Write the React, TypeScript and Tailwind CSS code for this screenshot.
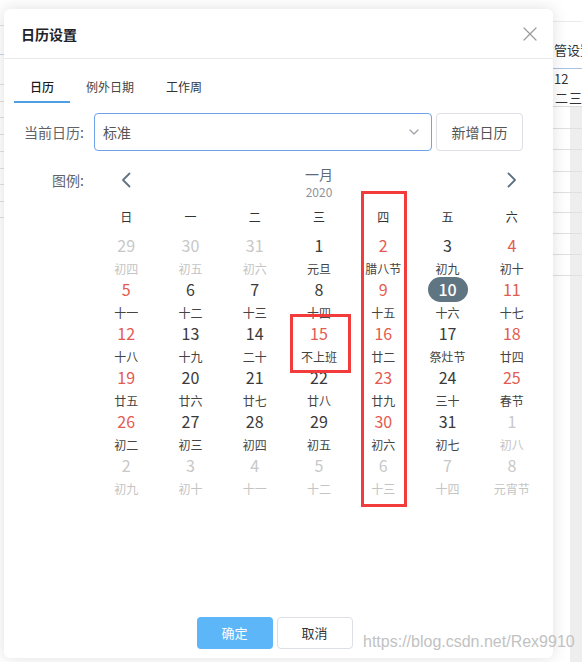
import React from "react";

type Cell = { d: string; l: string; t: "n" | "r" | "g"; lg?: boolean; sel?: boolean };

const rows: Cell[][] = [
  [
    { d: "29", l: "初四", t: "g", lg: true },
    { d: "30", l: "初五", t: "g", lg: true },
    { d: "31", l: "初六", t: "g", lg: true },
    { d: "1", l: "元旦", t: "n" },
    { d: "2", l: "腊八节", t: "r" },
    { d: "3", l: "初九", t: "n" },
    { d: "4", l: "初十", t: "r" },
  ],
  [
    { d: "5", l: "十一", t: "r" },
    { d: "6", l: "十二", t: "n" },
    { d: "7", l: "十三", t: "n" },
    { d: "8", l: "十四", t: "n" },
    { d: "9", l: "十五", t: "r" },
    { d: "10", l: "十六", t: "n", sel: true },
    { d: "11", l: "十七", t: "r" },
  ],
  [
    { d: "12", l: "十八", t: "r" },
    { d: "13", l: "十九", t: "n" },
    { d: "14", l: "二十", t: "n" },
    { d: "15", l: "不上班", t: "r" },
    { d: "16", l: "廿二", t: "r" },
    { d: "17", l: "祭灶节", t: "n" },
    { d: "18", l: "廿四", t: "r" },
  ],
  [
    { d: "19", l: "廿五", t: "r" },
    { d: "20", l: "廿六", t: "n" },
    { d: "21", l: "廿七", t: "n" },
    { d: "22", l: "廿八", t: "n" },
    { d: "23", l: "廿九", t: "r" },
    { d: "24", l: "三十", t: "n" },
    { d: "25", l: "春节", t: "r" },
  ],
  [
    { d: "26", l: "初二", t: "r" },
    { d: "27", l: "初三", t: "n" },
    { d: "28", l: "初四", t: "n" },
    { d: "29", l: "初五", t: "n" },
    { d: "30", l: "初六", t: "r" },
    { d: "31", l: "初七", t: "n" },
    { d: "1", l: "初八", t: "g", lg: true },
  ],
  [
    { d: "2", l: "初九", t: "g", lg: true },
    { d: "3", l: "初十", t: "g", lg: true },
    { d: "4", l: "十一", t: "g", lg: true },
    { d: "5", l: "十二", t: "g", lg: true },
    { d: "6", l: "十三", t: "g", lg: true },
    { d: "7", l: "十四", t: "g", lg: true },
    { d: "8", l: "元宵节", t: "g", lg: true },
  ],
];

const weekdays = ["日", "一", "二", "三", "四", "五", "六"];

function numClass(c: Cell) {
  if (c.t === "r") return "text-[#e35b50]";
  if (c.t === "g") return "text-[#c8c8c8]";
  return "text-[#3a3a3a]";
}

function Background() {
  return (
    <div className="flex h-full w-full">
      <div className="flex w-[4px] flex-col">
        <div className="h-[26px] border-b border-[#e2e2e2]" />
        <div className="h-[29px] border-b border-[#c9d6ea]" />
        <div className="h-[30px] border-b border-[#e2e2e2]" />
        <div className="h-[17px] border-b border-[#e2e2e2]" />
        <div className="h-[16px] border-b border-[#e2e2e2]" />
        <div className="h-[17px] border-b border-[#e2e2e2]" />
        <div className="h-[17px] border-b border-[#e2e2e2]" />
        <div className="h-[17px] border-b border-[#e2e2e2]" />
        <div className="h-[16px] border-b border-[#e2e2e2]" />
        <div className="h-[17px] border-b border-[#e2e2e2]" />
        <div className="h-[16px] border-b border-[#e2e2e2]" />
      </div>
      <div className="flex-1" />
      <div className="flex w-[29px] flex-col text-[13px] text-[#333]">
        <div className="h-[22px] border-b border-[#ececec]" />
        <div className="h-[47px] whitespace-nowrap border-b border-[#a9c3e6] pl-[1px] pt-[18px] leading-[20px]">管设置</div>
        <div className="h-[20px] whitespace-nowrap pl-[1px] leading-[20px]">12</div>
        <div className="flex h-[18px] border-b border-[#dcdcdc] leading-[17px]">
          <span className="w-[22px] pl-[2px]">二</span>
          <span>三</span>
        </div>
        <div className="flex h-[22px] border-b border-[#e0e0e0]">
          <div className="w-[17px]" />
          <div className="flex-1 bg-[#eeeeee]" />
        </div>
        <div className="flex h-[21px] border-b border-[#e0e0e0]">
          <div className="w-[17px]" />
          <div className="flex-1 bg-[#eeeeee]" />
        </div>
        <div className="flex h-[22px] border-b border-[#e0e0e0]">
          <div className="w-[17px]" />
          <div className="flex-1 bg-[#eeeeee]" />
        </div>
        <div className="flex h-[21px] border-b border-[#e0e0e0]">
          <div className="w-[17px]" />
          <div className="flex-1 bg-[#eeeeee]" />
        </div>
        <div className="flex h-[20px] border-b border-[#e0e0e0]">
          <div className="w-[17px]" />
          <div className="flex-1 bg-[#eeeeee]" />
        </div>
        <div className="flex h-[21px] border-b border-[#e0e0e0]">
          <div className="w-[17px]" />
          <div className="flex-1 bg-[#eeeeee]" />
        </div>
        <div className="flex h-[21px] border-b border-[#e0e0e0]">
          <div className="w-[17px]" />
          <div className="flex-1 bg-[#eeeeee]" />
        </div>
        <div className="flex h-[21px] border-b border-[#e0e0e0]">
          <div className="w-[17px]" />
          <div className="flex-1 bg-[#eeeeee]" />
        </div>
        <div className="flex flex-1">
          <div className="w-[17px]" />
          <div className="flex-1 bg-[#eeeeee]" />
        </div>
      </div>
    </div>
  );
}

export default function App() {
  return (
    <div className="relative h-[662px] w-[582px] overflow-hidden bg-white font-['Noto_Sans_CJK_SC',sans-serif]">
      <Background />

      {/* Dialog */}
      <div className="absolute left-[4px] top-[9px] flex h-[649px] w-[549px] flex-col rounded-[6px] bg-white shadow-[0_0_16px_rgba(0,0,0,0.13)]">
        <div className="flex h-[50px] shrink-0 items-center justify-between border-b border-[#e8e8e8] pl-[17px] pr-[16px]">
          <span className="text-[14px] font-semibold leading-[20px] text-[#1f2329]">日历设置</span>
          <svg width="14" height="14" viewBox="0 0 14 14" fill="none">
            <path d="M1 1L13 13M13 1L1 13" stroke="#9a9a9a" strokeWidth="1.2" strokeLinecap="round" />
          </svg>
        </div>

        {/* Tabs */}
        <div className="flex pl-[10px] pt-[18px] text-[12px] leading-[20px]">
          <div className="border-b-2 border-[#4f9fe2] px-[16px] pb-[4px] font-medium text-[#1a1a1a]">日历</div>
          <div className="border-b-2 border-transparent px-[16px] pb-[4px] text-[#444]">例外日期</div>
          <div className="border-b-2 border-transparent px-[16px] pb-[4px] text-[#333]">工作周</div>
        </div>

        {/* Current calendar row */}
        <div className="mt-[10px] flex items-center pl-[16px]">
          <div className="w-[64px] text-right text-[14px] leading-[20px] text-[#5f6368]">当前日历:</div>
          <div className="ml-[10px] flex h-[38px] w-[338px] items-center justify-between rounded-[4px] border border-[#6fa3ea] pl-[8px] pr-[12px]">
            <span className="text-[14px] text-[#555]">标准</span>
            <svg width="10" height="6" viewBox="0 0 10 6" fill="none">
              <path d="M1 1L5 5L9 1" stroke="#a0a3a8" strokeWidth="1.3" strokeLinecap="round" strokeLinejoin="round" />
            </svg>
          </div>
          <button className="ml-[4px] h-[38px] w-[87px] rounded-[4px] border border-[#dcdfe6] bg-white text-[14px] text-[#555]">
            新增日历
          </button>
        </div>

        {/* Calendar */}
        <div className="mt-[13px] flex pl-[16px]">
          <div className="w-[64px] pt-[6px] text-right text-[14px] leading-[20px] text-[#5f6368]">图例:</div>
          <div className="ml-[10px] w-[450px]">
            <div className="flex items-start justify-between">
              <div className="flex h-[32px] w-[64px] items-center justify-center">
                <svg width="10" height="16" viewBox="0 0 10 16" fill="none">
                  <path d="M8.5 1.5L2 8L8.5 14.5" stroke="#5f7282" strokeWidth="1.8" strokeLinecap="round" strokeLinejoin="round" />
                </svg>
              </div>
              <div className="flex flex-col items-center">
                <span className="text-[14px] leading-[20px] text-[#5b6b7b]">一月</span>
                <span className="text-[12px] leading-[16px] text-[#909399]">2020</span>
              </div>
              <div className="flex h-[32px] w-[64px] items-center justify-center">
                <svg width="10" height="16" viewBox="0 0 10 16" fill="none">
                  <path d="M1.5 1.5L8 8L1.5 14.5" stroke="#5f7282" strokeWidth="1.8" strokeLinecap="round" strokeLinejoin="round" />
                </svg>
              </div>
            </div>
            <div className="mt-[7px] grid grid-cols-7 text-center text-[12px] leading-[20px] text-[#333]">
              {weekdays.map((w) => (
                <div key={w}>{w}</div>
              ))}
            </div>
            <div className="mt-[7px] grid grid-cols-7 text-center">
              {rows.flat().map((c, i) => (
                <div key={i} className="flex h-[44px] flex-col items-center">
                  <div className="flex h-[22px] items-center justify-center text-[16px]">
                    {c.sel ? (
                      <span className="flex h-[25px] w-[40px] items-center justify-center rounded-full bg-[#5f7582] font-medium text-white">
                        {c.d}
                      </span>
                    ) : (
                      <span className={numClass(c)}>{c.d}</span>
                    )}
                  </div>
                  <div className={`mt-[4px] text-[12px] leading-[18px] ${c.lg ? "text-[#c4c4c4]" : "text-[#444]"}`}>{c.l}</div>
                </div>
              ))}
            </div>
          </div>
        </div>

        {/* Footer */}
        <div className="mt-auto flex justify-center gap-[4px] pb-[9px] pr-[8px]">
          <button className="h-[32px] w-[76px] rounded-[4px] bg-[#5cb6f8] text-[13px] text-white">确定</button>
          <button className="h-[32px] w-[76px] rounded-[4px] border border-[#dcdfe6] bg-white text-[13px] text-[#333]">取消</button>
        </div>
      </div>

      {/* Annotation boxes */}
      <div className="absolute left-[361px] top-[191px] h-[316px] w-[46px] border-[3px] border-[#f23c3c]" />
      <div className="absolute left-[290px] top-[314px] h-[59px] w-[61px] border-[3px] border-[#f23c3c]" />

      {/* Watermark */}
      <div className="absolute left-[363px] top-[633px] font-['Liberation_Sans',sans-serif] text-[16px] leading-[18px] text-[#c2c2c2]">
        https://blog.csdn.net/Rex9910
      </div>
    </div>
  );
}
